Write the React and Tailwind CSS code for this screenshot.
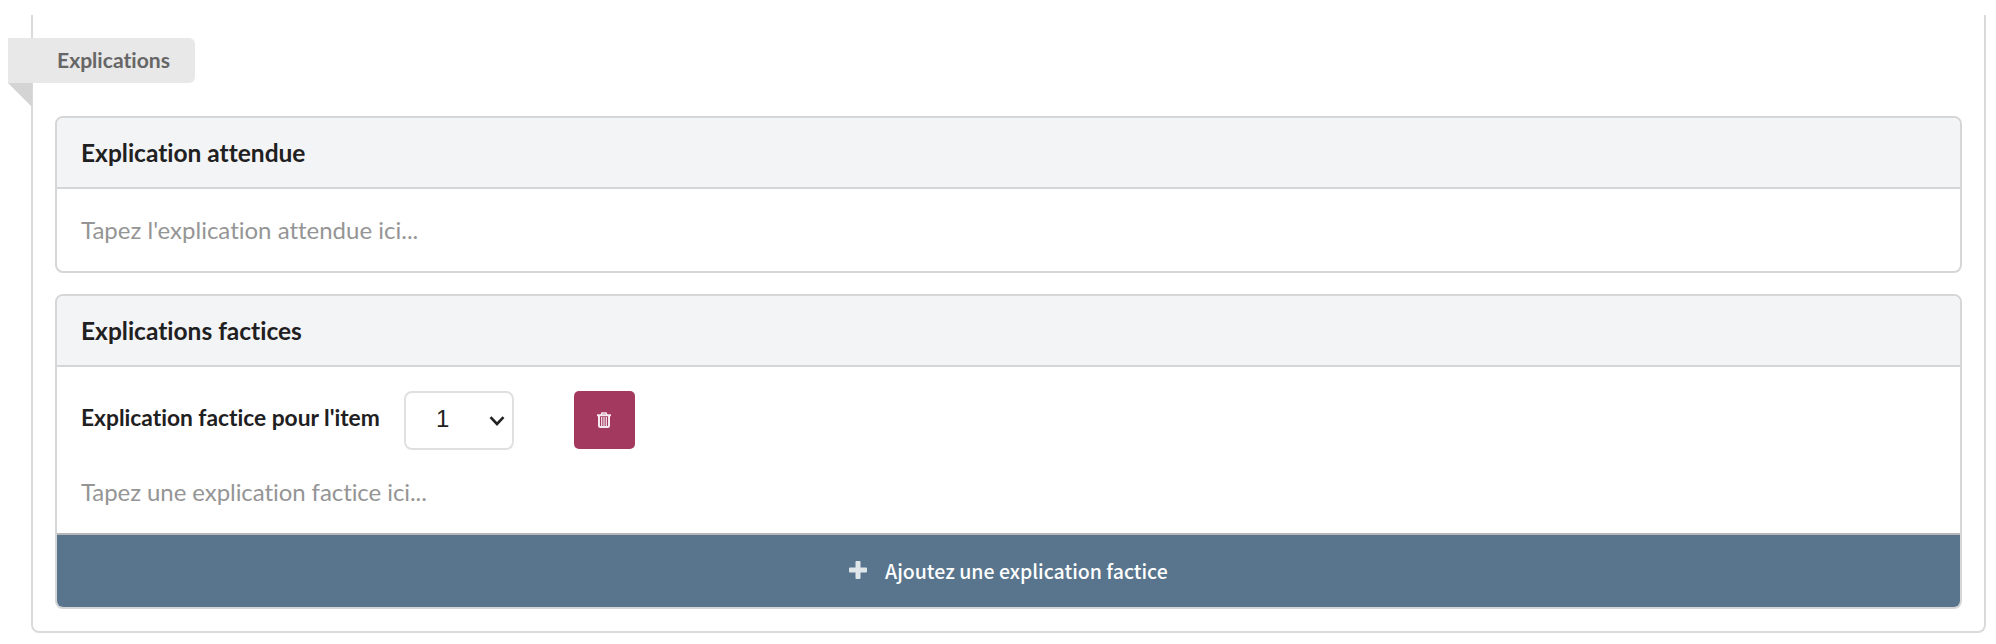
function Heading({ children }) {
  return (
    <div className="flex h-[69px] items-center bg-[#f3f4f5] pt-px pl-6 text-[24.5px] font-bold">{children}</div>
  );
}

function TrashIcon() {
  return (
    <svg className="h-4 w-[14px]" viewBox="0 0 14 16" fill="none" stroke="#f5e9ee">
      <path d="M0 3.3h14" strokeWidth="2" />
      <path d="M4.2 3L5 1h4l.8 2" strokeWidth="1.6" />
      <path d="M2 3.5v10q0 1.5 1.5 1.5h7q1.5 0 1.5-1.5v-10" strokeWidth="2" />
      <path d="M4.7 5v9M7 5v9M9.3 5v9" strokeWidth="1.2" />
    </svg>
  );
}

export default function App() {
  return (
    <div className="h-[644px] w-[1996px] bg-white pt-[15px] pl-[31px] font-['Lato',sans-serif] text-[#1f2021] [font-variant-ligatures:none]">
      <section className="h-[618px] w-[1955px] rounded-b-lg border-2 border-t-0 border-[#d9dadb] px-[22px] pt-[23px]">
        <div className="relative -ml-[47px] flex h-[45px] w-[187px] items-center rounded-r-md bg-[#e8e8e8] pb-[2px] pl-[49px] text-[21.1px] font-bold text-[#666]">
          Explications
          <svg className="absolute top-full left-0 h-6 w-6" viewBox="0 0 24 24">
            <path d="M0 0h24v24z" fill="#d4d4d4" />
          </svg>
        </div>

        <div className="mt-[33px] h-[157px] overflow-hidden rounded-lg border-2 border-[#d5d6d7]">
          <Heading>Explication attendue</Heading>
          <div className="flex h-[84px] items-center border-t-2 border-[#d5d6d7] pl-6 text-[24px] text-[#959595]">
            Tapez l'explication attendue ici...
          </div>
        </div>

        <div className="mt-[21px] h-[315px] overflow-hidden rounded-lg border-2 border-[#d5d6d7]">
          <Heading>Explications factices</Heading>
          <div className="h-[168px] border-t-2 border-[#d5d6d7] pt-6 pl-6">
            <div className="flex h-[59px] items-start">
              <div className="w-[323px] pt-[10px] text-[22.75px] font-bold">Explication factice pour l'item</div>
              <div className="flex h-[59px] w-[110px] items-center rounded-lg border-2 border-[#dfe0e1] pb-[3px] pl-[30px] font-['Liberation_Sans',sans-serif] text-[24px] text-[#222]">
                1
                <svg className="mt-1 ml-10 h-[10px] w-4" viewBox="0 0 16 10" fill="none" stroke="#222" strokeWidth="2.6">
                  <path d="M1.5 1.2L8 8l6.5-6.8" />
                </svg>
              </div>
              <div className="ml-[60px] flex h-[58px] w-[61px] items-center justify-center rounded-[5px] bg-[#a3395f] pr-px">
                <TrashIcon />
              </div>
            </div>
            <div className="mt-6 text-[24px] tracking-[-0.07px] text-[#959595]">Tapez une explication factice ici...</div>
          </div>
          <div className="flex h-[74px] items-center border-t-2 border-[#b5b6b8] bg-[#58758d] pb-[2px] pl-[792px] text-white">
            <svg className="h-[18px] w-[18px]" viewBox="0 0 18 18" fill="#dfe6ea">
              <path d="M7.5 0h3q1 0 1 1v5.5h5.5q1 0 1 1v3q0 1-1 1h-5.5v5.5q0 1-1 1h-3q-1 0-1-1v-5.5H1q-1 0-1-1v-3q0-1 1-1h5.5V1q0-1 1-1z" />
            </svg>
            <span className="mt-[2px] ml-[18px] font-['Noto_Sans_CJK_SC',sans-serif] text-[19.5px] font-medium">Ajoutez une explication factice</span>
          </div>
        </div>
      </section>
    </div>
  );
}
